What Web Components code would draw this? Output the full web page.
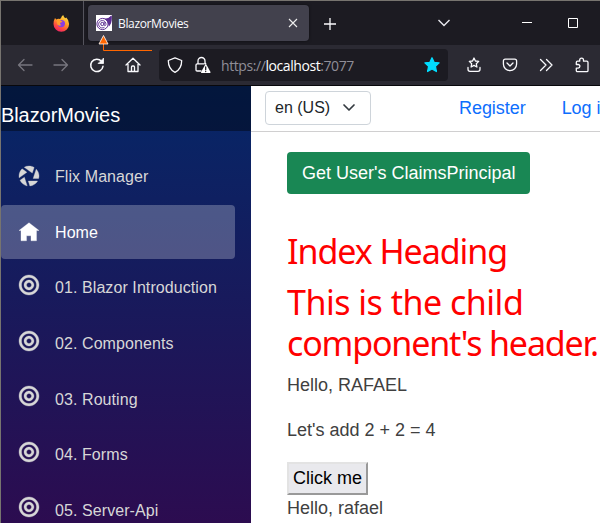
<!DOCTYPE html>
<html lang="en"><head><meta charset="utf-8"><title>BlazorMovies</title>
<style>html,body{margin:0;width:600px;height:523px;overflow:hidden;background:#1c1b22}</style></head>
<body><browser-window></browser-window>
<script>
const define=(name,html)=>customElements.define(name,class extends HTMLElement{
  constructor(){super();this.attachShadow({mode:'open'}).innerHTML='<style>*{box-sizing:border-box}svg{display:block;flex:none;overflow:visible}:host{box-sizing:border-box}</style>'+html;}
});
define('tab-strip',`<style>
:host{display:flex;height:44px;background:#1c1b22;align-items:flex-start;font:12px "Open Sans","Noto Sans",sans-serif;color:#fbfbfe}
.pin{width:83px;height:44px;border-right:1px solid #55545d;padding:14px 0 0 52px}
.tab{position:relative;display:flex;align-items:center;margin:4px 0 0 4px;width:221px;height:36px;border-radius:4px;background:#42414d;padding:0 11px 0 8px;box-shadow:0 0 3px #0008}
.t{margin-left:6px;flex:1;letter-spacing:-.35px;white-space:nowrap}
.plus{margin:17px 0 0 15px}.down{margin:18px 0 0 102px}.min{margin:21px 0 0 72px}.max{margin:17px 0 0 36px}
.arrow{position:absolute;left:11px;top:30px}
</style>
<div class="pin"><svg width="17" height="17" viewBox="0 0 17 17"><defs><linearGradient id="f" x1=".8" y1="0" x2=".3" y2="1"><stop offset="0" stop-color="#ffe84a"/><stop offset=".45" stop-color="#ff9a24"/><stop offset=".75" stop-color="#ff4a42"/><stop offset="1" stop-color="#ed2264"/></linearGradient></defs><path fill="url(#f)" d="M2 3l1.3 1.4Q5 3.2 7 4l1-1Q8.600 1 10.200 0q.4 2 2 3.200l1.100-.6q2.800 2.700 2.800 6.300a7.800 7.800 0 0 1-15.600 0Q.5 5.500 2 3z"/><circle cx="8.300" cy="8.600" r="3.700" fill="#8a3be5"/><path fill="#ff9c2b" d="M3.500 5.300q2.700-1.200 4.500.4 1 .5 1.500 1.300-2.500.1-2.500 1.500 0 1.300 1.500 1.600-2.500 1.300-4.200-.5z"/></svg></div>
<div class="tab"><svg width="16" height="16" viewBox="0 0 16 16"><path fill="#fff" d="M0 0h16v16H0z"/><path fill="#5c2d91" d="M6 3.300Q12 5 15.600.4C16.200 6 15.300 9 12.800 11.500Q12.500 6 6 3.300z"/><circle cx="6.500" cy="9" r="5.600" fill="#fff" stroke="#5c2d91" stroke-width="1"/><path fill="#5c2d91" d="M8.500 3.600Q12.500 4 15.500.6 16 6.500 12.900 10 12 6 8.500 3.600z"/><circle cx="6.300" cy="9" r="1.600" fill="none" stroke="#5c2d91"/><path fill="none" stroke="#5c2d91" stroke-width=".9" d="M8.200 7v2.700q.2 1.200 1.200.8.900-.8.400-2.500a3.700 3.700 0 1 0-1.300 4.200"/></svg>
<span class="t">BlazorMovies</span><svg width="10" height="10" viewBox="0 0 10 10"><path d="M1 1l8 8M9 1L1 9" fill="none" stroke="#eee" stroke-width="1.100"/></svg>
<svg class="arrow" width="53" height="17" viewBox="0 0 53 17"><path d="M4.500 7v8.500H53" fill="none" stroke="#f60" stroke-width="1"/><path d="M4.500.5L9 9H0z" fill="#f60" stroke="#fff" stroke-width=".8"/></svg></div>
<svg class="plus" width="12" height="12"><path d="M6 0v12M0 6h12" stroke="#fbfbfe" stroke-width="1.300"/></svg>
<svg class="down" width="12" height="8" viewBox="0 0 12 8"><path d="M.5 1L6 6.500 11.500 1" fill="none" stroke="#e8e8ee" stroke-width="1.400"/></svg>
<svg class="min" width="10" height="1"><path fill="#fff" d="M0 0h10v1H0z"/></svg>
<svg class="max" width="10" height="10"><path fill="none" stroke="#fff" d="M.5.5h9v9h-9z"/></svg>`);

define('address-toolbar',`<style>
:host{display:flex;align-items:center;height:41px;background:#2b2a33;border-bottom:1px solid #08080c;color:#fbfbfe}
.nav{display:grid;grid-template-columns:repeat(4,16px);column-gap:20px;width:158px;padding-left:16px}
.url{display:flex;align-items:center;width:289px;height:32px;border-radius:4px;background:#1c1b22;padding:0 7px 0 8px;font:14px "Open Sans","Noto Sans",sans-serif}
.addr{margin-left:9px;flex:1;color:#8f8e98;white-space:nowrap;letter-spacing:-.42px}.addr b{font-weight:400;color:#fff}
.tools{display:flex;gap:20px;margin-left:18px}
svg{fill:none;stroke:#fbfbfe;stroke-width:1.300;stroke-linecap:round;stroke-linejoin:round}
</style>
<div class="nav"><svg width="16" height="16" style="stroke:#77767f"><path d="M15 8H1.500M7 2.500L1.500 8 7 13.500"/></svg>
<svg width="16" height="16" style="stroke:#77767f"><path d="M1 8h13.500M9 2.500L14.500 8 9 13.500"/></svg>
<svg width="16" height="16"><path stroke-width="1.500" d="M12.500 4.200A6.200 6.200 0 1 0 14 9.300"/><path fill="#fbfbfe" stroke-width=".8" d="M14.500 1.500v5h-5z"/></svg>
<svg width="16" height="16"><path d="M1 8l7-6.800L15 8M3 7v7.500h10V7M6.500 14.200V10q0-1 1-1h1q1 0 1 1v4.200"/></svg></div>
<div class="url"><svg width="16" height="16"><path d="M8 .8L14.700 3.500c0 5.800-2 9.500-6.700 11.800C3.300 13 1.300 9.300 1.300 3.500z"/></svg>
<svg width="18" height="16" style="margin-left:11px"><path d="M7 14H3.200q-1.200 0-1.200-1.200V8q0-1.200 1.200-1.200H10M4 6.500V4a3.500 3.500 0 0 1 7 0v2.500h.7"/><path fill="#fff" stroke="none" d="M11.800 6.500L16.500 15q.2.900-.6.900H7.500q-.8 0-.4-.9z"/><path stroke="#1c1b22" d="M11.700 10v2.700M11.700 14.400v.1"/></svg>
<span class="addr">https://<b>localhost</b>:7077</span>
<svg width="18" height="18" viewBox="0 0 18 18"><path style="fill:#00ddff;stroke:#00ddff" d="M9 1.800l2.100 4.500 5 .6-3.700 3.500 1 5.100L9 13l-4.400 2.500 1-5.100L1.900 6.900l5-.6z"/></svg></div>
<div class="tools">
<svg width="16" height="16"><path d="M8 1l1.400 3 3.300.4-2.400 2.300.6 3.300L8 8.400 5.100 10l.6-3.300-2.400-2.300L6.600 4zM2 10.500v1.800q0 2 2 2h8q2 0 2-2v-1.800"/></svg>
<svg width="16" height="16"><path d="M3.300 2.200h9.400q1.900 0 1.900 1.900V7A6.600 6.600 0 0 1 1.400 7V4.100q0-1.900 1.900-1.900zM5 6l3 3 3-3"/></svg>
<svg width="16" height="16"><path d="M2.500 2.500L8 8l-5.500 5.500M8.500 2.500L14 8l-5.500 5.500"/></svg>
<svg width="16" height="16"><path d="M5.700 4.200V3a1.900 1.900 0 0 1 3.800 0v1.200h3.300q1.200 0 1.200 1.200v8q0 1.300-1.200 1.300H3.500q-1.200 0-1.200-1.300v-2.300h1.800a1.600 1.600 0 0 0 0-3.600H2.300V5.400q0-1.200 1.200-1.200z"/></svg></div>`);

class NavItem extends HTMLElement{
 connectedCallback(){
  const icons={
   target:'M4 0c-2.200 0-4 1.800-4 4s1.800 4 4 4 4-1.800 4-4-1.800-4-4-4zm0 1c1.660 0 3 1.340 3 3s-1.340 3-3 3-3-1.340-3-3 1.340-3 3-3zm0 1c-1.100 0-2 .9-2 2s.9 2 2 2 2-1.100 2-2-.9-2-2-2zm0 1c.56 0 1 .44 1 1s-.44 1-1 1-1-.44-1-1 .44-1 1-1z',
   home:'M4 0.300l-4 3.100h.8v4.100h2.200v-2h1.800v2h2.200v-4.100h1z',
   aperture:'M4 0c-.69 0-1.340.19-1.910.5l3.220 2.340.75-2.250c-.6-.36-1.310-.59-2.060-.59zm-2.750 1.130c-.76.73-1.250 1.740-1.250 2.880 0 .25.02.48.06.72l3.090-2.220-1.910-1.380zm5.630.13l-1.220 3.750h2.190c.08-.32.16-.65.16-1 0-1.070-.44-2.030-1.130-2.750zm-4.720 3.220l-1.750 1.250c.55 1.130 1.600 1.990 2.880 2.220l-1.130-3.470zm1.560 1.530l.63 1.970c1.330-.12 2.460-.88 3.090-1.970h-3.720z'};
  this.attachShadow({mode:'open'}).innerHTML=`<style>:host{display:flex;align-items:center;box-sizing:border-box;width:234px;height:54px;padding-left:18px;border-radius:4px;color:#d7d7d7;font:16px "Liberation Sans",Arial,sans-serif}:host([active]){background:rgba(255,255,255,.25);color:#fff}svg{width:20px;height:20px;overflow:visible;margin-right:16px;flex:none;margin-bottom:var(--icon-lift,0);stroke:currentColor;stroke-width:.13px}span{white-space:nowrap;letter-spacing:.08px;padding-top:1.500px}</style><svg viewBox="0 0 8 8"><path fill="currentColor" d="${icons[this.getAttribute('icon')]}"/></svg><span><slot></slot></span>`;
 }}
customElements.define('nav-item',NavItem);

define('side-bar',`<style>
:host{display:block;width:250px;height:437px;background:linear-gradient(180deg,#052767 0,#2c0c50 437px)}
.brand{height:45px;background:rgba(0,0,0,.4);color:#fff;font:20px/23px "Liberation Sans",Arial,sans-serif;padding-top:18px;letter-spacing:-.08px}
nav{display:grid;grid-auto-rows:54px;row-gap:1.600px;padding-top:18.400px}
nav-item[icon=target]{--icon-lift:5px}
</style><div class="brand">BlazorMovies</div><nav><nav-item icon="aperture">Flix Manager</nav-item><nav-item icon="home" active>Home</nav-item><nav-item icon="target">01. Blazor Introduction</nav-item><nav-item icon="target">02. Components</nav-item><nav-item icon="target">03. Routing</nav-item><nav-item icon="target">04. Forms</nav-item><nav-item icon="target">05. Server-Api</nav-item></nav>`);

define('top-row',`<style>
:host{display:flex;height:46px;border-bottom:1px solid #d0cfd0;background:#fff;padding:5px 0 0 14px;font:18px "Liberation Sans",Arial,sans-serif;color:#0d6efd;white-space:nowrap;overflow:hidden}
.sel{display:flex;align-items:center;width:106px;height:34px;border:1px solid #ced4da;border-radius:4px;color:#212529;font-size:16px;padding:0 15px 0 9px;justify-content:space-between;flex:none}
a{line-height:35px;margin-left:88px;flex:none;letter-spacing:-.05px}a+a{margin-left:36px}
</style><div class="sel"><span>en (US)</span><svg width="12" height="8"><path d="M1 1l5 5 5-5" fill="none" stroke="#343a40" stroke-width="1.700" stroke-linecap="round" stroke-linejoin="round"/></svg></div><a>Register</a><a>Log in</a>`);

define('page-content',`<style>
:host{display:flex;flex-direction:column;align-items:flex-start;padding:20px 0 0 36px;font:18px/27px "Liberation Sans",Arial,sans-serif;color:#404040;white-space:nowrap}
.claims{background:#198754;border-radius:4px;color:#fff;width:243px;height:42px;line-height:42px;padding-left:15px}
h1{margin:0;color:red;font:400 34px/41px "Noto Sans",sans-serif}
.a{margin-top:37px;letter-spacing:-1.050px}.b{margin-top:10px;letter-spacing:-.5px}.l2{letter-spacing:-1.170px}
p{margin:0}.hello{margin-top:8px}.add{margin-top:18px}
.click{margin-top:18px;width:81px;height:33px;line-height:28px;color:#000;background:#e9e9ed;border:2px solid;border-color:#e3e3e3 #999 #999 #e3e3e3;padding-left:4px}
</style><div class="claims">Get User's ClaimsPrincipal</div><h1 class="a">Index Heading</h1><h1 class="b">This is the child<br><span class="l2">component's header.</span></h1><p class="hello">Hello, RAFAEL</p><p class="add">Let's add 2 + 2 = 4</p><div class="click">Click me</div><p>Hello, rafael</p>`);

define('browser-window',`<style>
:host{display:block;width:600px;height:523px;border:solid #77746f;border-width:1px 0 0 1px;overflow:hidden}
.page{display:grid;grid-template-columns:250px 349px;background:#fff}
main{min-width:0;overflow:hidden;height:437px}
</style><tab-strip></tab-strip><address-toolbar></address-toolbar><div class="page"><side-bar></side-bar><main><top-row></top-row><page-content></page-content></main></div>`);
</script></body></html>
